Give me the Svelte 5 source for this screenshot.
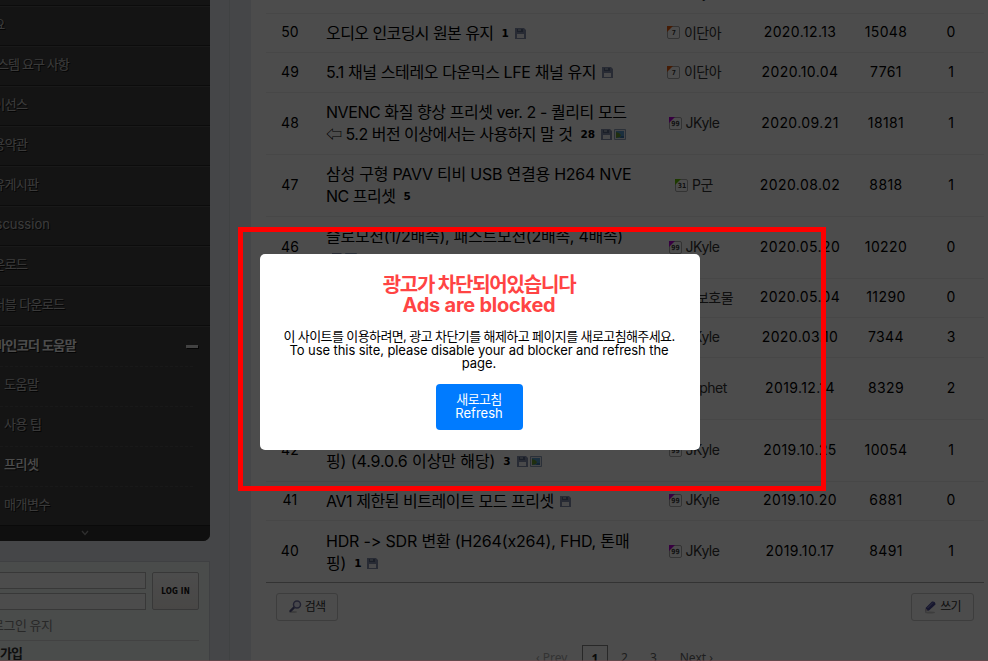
<script>
    // labels run off the left edge of the page, indent keeps their ends in place
    const menu = [
        { label: '', indent: 0, spacing: 0 },
        { label: '개요', indent: -18, spacing: -0.6 },
        { label: '시스템 요구 사항', indent: -14, spacing: -0.9 },
        { label: '라이선스', indent: -18, spacing: -0.6 },
        { label: '이용약관', indent: -18, spacing: -0.6 },
        { label: '자유게시판', indent: -18, spacing: -0.7 },
        { label: 'Discussion', indent: -17, spacing: 0 },
        { label: '다운로드', indent: -18, spacing: -0.6 },
        { label: '포터블 다운로드', indent: -18, spacing: -0.6 }
    ];
    const submenu = ['도움말', '사용 팁', '프리셋', '매개변수'];

    const posts = [
        { no: '', height: 40, lines: [['', 0]], name: 'JKyle', level: 99, date: '', views: '', votes: '' },
        { no: 50, height: 39, lines: [['오디오 인코딩시 원본 유지', -0.57]], comments: 1, file: true, name: '이단아', level: 7, date: '2020.12.13', views: 15048, votes: 0 },
        { no: 49, height: 40, lines: [['5.1 채널 스테레오 다운믹스 LFE 채널 유지', -0.39]], file: true, name: '이단아', level: 7, date: '2020.10.04', views: 7761, votes: 1 },
        { no: 48, height: 62, lines: [['NVENC 화질 향상 프리셋 ver. 2 - 퀄리티 모드', -0.43], ['⇦ 5.2 버전 이상에서는 사용하지 말 것', -0.5]], comments: 28, file: true, image: true, name: 'JKyle', level: 99, date: '2020.09.21', views: 18181, votes: 1 },
        { no: 47, height: 62, lines: [['삼성 구형 PAVV 티비 USB 연결용 H264 NVE', -0.24], ['NC 프리셋', -0.5]], comments: 5, name: 'P군', level: 31, date: '2020.08.02', views: 8818, votes: 1 },
        { no: 46, height: 62, lines: [['슬로모션(1/2배속), 패스트모션(2배속, 4배속)', -0.27], ['', 0]], file: true, image: true, name: 'JKyle', level: 99, date: '2020.05.20', views: 10220, votes: 0 },
        { no: 45, height: 39, lines: [['', 0]], name: '보호물', wide: true, level: 31, date: '2020.05.04', views: 11290, votes: 0 },
        { no: 44, height: 40, lines: [['', 0]], name: 'JKyle', level: 99, date: '2020.03.10', views: 7344, votes: 3 },
        { no: 43, height: 62, lines: [['', 0], ['', 0]], name: 'Prophet', level: 31, date: '2019.12.14', views: 8329, votes: 2 },
        { no: 42, height: 62, lines: [['', 0], ['핑) (4.9.0.6 이상만 해당)', -0.1]], comments: 3, file: true, image: true, name: 'JKyle', level: 99, date: '2019.10.25', views: 10054, votes: 1 },
        { no: 41, height: 39, lines: [['AV1 제한된 비트레이트 모드 프리셋', -0.45]], file: true, name: 'JKyle', level: 99, date: '2019.10.20', views: 6881, votes: 0 },
        { no: 40, height: 62, lines: [['HDR -> SDR 변환 (H264(x264), FHD, 톤매', -0.17], ['핑)', -0.2]], comments: 1, file: true, name: 'JKyle', level: 99, date: '2019.10.17', views: 8491, votes: 1 }
    ];

    const levelColors = { 7: '#e85a10', 31: '#66c400', 99: '#b800d8' };
</script>

<div class="page">
    <aside>
        <nav>
            {#each menu as item}
                <a class="item" href="#menu" style:text-indent="{item.indent}px" style:letter-spacing="{item.spacing}px">{item.label}</a>
            {/each}
            <a class="item open" href="#menu"><span>바인코더 도움말</span><i class="minus"></i></a>
            <div class="sub">
                {#each submenu as label}
                    <a href="#sub" class:active={label === '프리셋'}>{label}</a>
                {/each}
            </div>
            <div class="nav-foot">
                <svg width="8" height="6" viewBox="0 0 8 6"><path d="M1 1l3 3.4L7 1" fill="none" stroke="#999" stroke-width="1.3" /></svg>
            </div>
        </nav>
        <div class="login">
            <div class="fields">
                <div class="inputs"><div class="input"></div><div class="input"></div></div>
                <button class="login-btn">LOG IN</button>
            </div>
            <div class="keep">로그인 유지</div>
            <div class="join">가입</div>
        </div>
    </aside>
    <div class="gutter"></div>
    <main>
        <div class="list">
            {#each posts as post}
                <div class="row" style:height="{post.height}px">
                    <div class="num">{post.no}</div>
                    <div class="title">
                        {#each post.lines as [text, spacing], i}
                            <div class="line">
                                <span style:letter-spacing="{spacing}px">{text}</span>
                                {#if i === post.lines.length - 1}
                                    {#if post.comments}<b>{post.comments}</b>{/if}
                                    {#if post.file}
                                        <svg class="file" width="11" height="11" viewBox="0 0 11 11">
                                            <path d="M0 0h9l2 2v9H0z" fill="#8592ad" />
                                            <path d="M2 1h6v3H2z" fill="#5d6a86" />
                                            <path d="M3 1.500h3v1H3z" fill="#d5dbe6" />
                                            <path d="M2 6h7v4H2z" fill="#f5f6f8" />
                                        </svg>
                                    {/if}
                                    {#if post.image}
                                        <svg class="image" width="12" height="11" viewBox="0 0 12 11">
                                            <path d="M.5.5h11v10H.5z" fill="#e6ebf2" stroke="#8fa0bb" />
                                            <path d="M2 2h8v7H2z" fill="#5a9fd0" />
                                            <path d="M2 3l3 1 2 2-1 2-4 1z" fill="#6d9d38" />
                                            <path d="M7 7h3v2H6z" fill="#3f78b0" />
                                        </svg>
                                    {/if}
                                {/if}
                            </div>
                        {/each}
                    </div>
                    <div class="name" class:wide={post.wide}>
                        <span class="level">
                            <svg width="6" height="6" viewBox="0 0 6 6"><path d="M0 0h6L0 6z" fill={levelColors[post.level]} /></svg>
                            <em>{post.level}</em>
                        </span>
                        <span class="nick">{post.name}</span>
                    </div>
                    <div class="date">{post.date}</div>
                    <div class="views">{post.views}</div>
                    <div class="votes">{post.votes}</div>
                </div>
            {/each}
        </div>
        <div class="actions">
            <button>
                <svg width="13" height="14" viewBox="0 0 13 14">
                    <ellipse cx="4" cy="12" rx="4" ry="1" fill="#ccc" />
                    <path d="M1.500 11l4-4" stroke="#5a5a8c" stroke-width="2.400" stroke-linecap="round" />
                    <circle cx="8" cy="4.500" r="3.500" fill="#eef" stroke="#7272a6" stroke-width="1.500" />
                </svg>
                <span>검색</span>
            </button>
            <button class="write">
                <svg width="13" height="14" viewBox="0 0 13 14">
                    <ellipse cx="6" cy="12.500" rx="5" ry="1" fill="#ccc" />
                    <path d="M1 11.500l1-4 6-6q3.500-.5 3.500 3L5 10.500z" fill="#4c4c9c" />
                    <path d="M3.500 8l5.500-5.500" stroke="#9999d8" />
                    <path d="M1 11.500l.7-3 2.300 2z" fill="#d8cfc4" />
                </svg>
                <span>쓰기</span>
            </button>
        </div>
        <div class="pages">
            <span class="prev">‹ Prev</span>
            <strong>1</strong>
            <span class="p2">2</span>
            <span class="p3">3</span>
            <span class="next">Next ›</span>
        </div>
    </main>

    <div class="overlay"></div>
    <div class="modal">
        <h2>광고가 차단되어있습니다<br /><span>Ads are blocked</span></h2>
        <p>이 사이트를 이용하려면, 광고 차단기를 해제하고 페이지를 새로고침해주세요.<br /><span>To use this site, please disable your ad blocker and refresh the<br />page.</span></p>
        <button>새로고침<br /><span>Refresh</span></button>
    </div>
    <div class="frame"></div>
</div>

<style>
    :global(body) {
        margin: 0;
    }

    .page {
        position: relative;
        display: flex;
        width: 988px;
        height: 661px;
        overflow: hidden;
        background: #e8ebf0;
        font-family: Inter, "Noto Sans CJK KR", sans-serif;
        color: #000;
    }

    .page * {
        box-sizing: border-box;
    }

    a {
        color: inherit;
        text-decoration: none;
    }

    button {
        font-family: inherit;
        padding: 0;
    }

    aside {
        width: 210px;
        height: 661px;
        flex: none;
        overflow: hidden;
    }

    nav {
        margin-top: -34px;
        background: #444;
        border-radius: 0 0 7px 0;
        overflow: hidden;
        font-size: 13px;
        color: #c4c4c4;
        text-shadow: 1px 1px 0 #111;
    }

    .item {
        display: flex;
        align-items: center;
        height: 40px;
        width: 210px;
        padding-bottom: 5px;
        border-top: 1px solid #555;
        border-bottom: 1px solid #2b2b2b;
        white-space: nowrap;
    }

    .item.open {
        justify-content: space-between;
        padding-right: 12px;
        border-bottom: 0;
        color: #fff;
        font-weight: 700;
        letter-spacing: -0.6px;
        text-indent: -6px;
    }

    .minus {
        width: 12px;
        height: 3px;
        margin-top: 5px;
        background: #ddd;
        box-shadow: 1px 1px 0 #111;
    }

    .sub {
        width: 193px;
    }

    .sub a {
        display: flex;
        align-items: center;
        height: 40px;
        padding: 0 0 6px 4px;
        border-top: 1px dashed #555;
        letter-spacing: -0.5px;
    }

    .sub a:last-child {
        height: 39px;
    }

    .sub a.active {
        color: #fff;
        font-weight: 500;
    }

    .nav-foot {
        height: 16px;
        padding-left: 81px;
        background: #333;
        border-top: 1px solid #222;
        line-height: 11px;
    }

    .login {
        height: 110px;
        margin-top: 20px;
        padding-top: 10px;
        background: #f8fffb;
        border: 1px solid #d4d8dc;
        border-left: 0;
        font-size: 13px;
    }

    .fields {
        display: flex;
        gap: 6px;
    }

    .inputs {
        display: flex;
        flex-direction: column;
        gap: 4px;
        width: 146px;
    }

    .input {
        height: 17px;
        background: #fff;
        border: 1px solid #bbb;
        border-left: 0;
    }

    .login-btn {
        width: 47px;
        height: 38px;
        background: linear-gradient(#fff, #f2eeea);
        border: 1px solid #bbb;
        border-radius: 2px;
        font: 700 8px "DejaVu Sans Condensed", "DejaVu Sans", sans-serif;
        letter-spacing: 0.2px;
        color: #111;
    }

    .keep {
        height: 31px;
        width: 199px;
        border-bottom: 1px solid #ddd;
        line-height: 31px;
        color: #888;
        text-indent: -8px;
        letter-spacing: -0.5px;
    }

    .join {
        line-height: 25px;
        font-weight: 700;
        color: #333;
        letter-spacing: -0.9px;
    }

    .gutter {
        width: 41px;
        flex: none;
        background: linear-gradient(#d8dce0, #d8dce0) 19px 0 / 1px 100% no-repeat;
    }

    main {
        width: 737px;
        height: 661px;
        flex: none;
        padding-left: 15px;
        overflow: hidden;
        background: #fff;
    }

    .list {
        width: 718px;
        margin-top: -26px;
        border-bottom: 1px solid #aaa;
    }

    .row {
        display: grid;
        grid-template-columns: 48px 322px 116px 96px 76px 54px;
        align-items: center;
        padding-bottom: 3px;
        border-bottom: 1px solid #eee;
        font-size: 14px;
        text-align: center;
    }

    .row:last-child {
        margin-bottom: -1px;
        border-bottom: 0;
    }

    .num {
        letter-spacing: 0.2px;
    }

    .title {
        padding-left: 12px;
        text-align: left;
        font-size: 16px;
        white-space: nowrap;
    }

    .line {
        display: flex;
        align-items: center;
        height: 22px;
    }

    .line b {
        margin: 2px 0 0 8px;
        font: 700 10.500px "DejaVu Sans", sans-serif;
    }

    .file {
        margin: 3px 0 0 6px;
    }

    .image {
        margin: 3px 0 0 2px;
    }

    .name {
        display: flex;
        align-items: center;
        justify-content: center;
        gap: 4px;
        color: #333;
    }

    .name.wide {
        padding-left: 24px;
    }

    .nick {
        letter-spacing: -0.5px;
    }

    .date,
    .views {
        letter-spacing: 0.4px;
    }

    .level {
        position: relative;
        width: 13px;
        height: 13px;
        margin-top: 2px;
        border: 1px solid #aaa;
        border-radius: 2px;
    }

    .level svg {
        position: absolute;
        left: -1px;
        top: -1px;
    }

    .level em {
        display: block;
        padding-left: 1px;
        font: 700 7px/12px "DejaVu Sans Mono", monospace;
    }

    .actions {
        display: flex;
        justify-content: space-between;
        width: 698px;
        margin: 10px 0 0 10px;
    }

    .actions button {
        display: flex;
        align-items: center;
        justify-content: center;
        gap: 3px;
        width: 62px;
        height: 28px;
        background: #fff;
        border: 1px solid #ccc;
        border-radius: 3px;
        font-size: 12px;
        letter-spacing: -0.9px;
        color: #333;
    }

    .actions button.write {
        width: 63px;
    }

    .actions button span {
        padding-bottom: 4px;
    }

    .pages {
        display: flex;
        margin: 24px 0 0 270px;
        font: 12px/26px "Noto Sans", sans-serif;
        color: #666;
    }

    .prev {
        width: 46px;
        color: #aaa;
    }

    .pages strong {
        width: 26px;
        height: 26px;
        border: 1px solid #888;
        color: #222;
        text-align: center;
    }

    .p2 { margin-left: 13px; }
    .p3 { margin-left: 22px; }
    .next { margin-left: 23px; }

    .overlay {
        position: absolute;
        inset: 0;
        background: rgba(0, 0, 0, 0.7);
        border-bottom: 1px solid rgba(120, 70, 75, 0.5);
    }

    .modal {
        position: absolute;
        left: 260px;
        top: 254px;
        width: 440px;
        height: 196px;
        padding: 21px 2px 0 0;
        background: #fff;
        border-radius: 5px;
        text-align: center;
    }

    .modal h2 {
        margin: 0;
        font-size: 20px;
        line-height: 20px;
        color: #ff4444;
        letter-spacing: -1.2px;
    }

    .modal h2 span {
        letter-spacing: -0.25px;
    }

    .modal p {
        margin: 15px 0 0;
        font-size: 13px;
        line-height: 13.500px;
        letter-spacing: -0.6px;
        white-space: nowrap;
    }

    .modal p span {
        letter-spacing: -0.08px;
    }

    .modal button {
        width: 87px;
        height: 46px;
        margin-top: 13px;
        background: #007bff;
        border: 0;
        border-radius: 4px;
        font-size: 13px;
        line-height: 13.500px;
        letter-spacing: -0.6px;
        color: #fff;
    }

    .modal button span {
        letter-spacing: 0;
    }

    .frame {
        position: absolute;
        left: 238px;
        top: 227px;
        width: 588px;
        height: 264px;
        border: 5px solid #f00;
    }
</style>
